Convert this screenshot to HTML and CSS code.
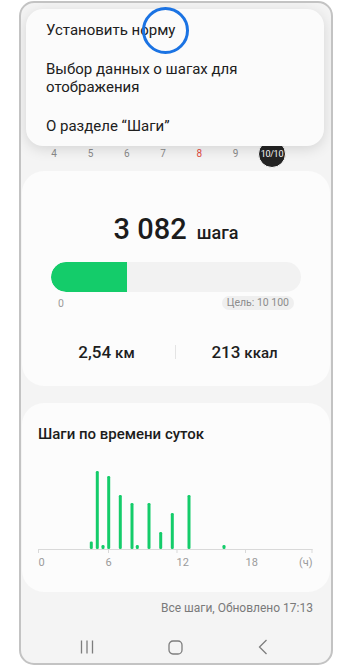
FILE: index.html
```html
<!DOCTYPE html>
<html lang="ru">
<head>
<meta charset="utf-8">
<title>Шаги</title>
<link rel="stylesheet" href="styles.css">
</head>
<body>
<div class="phone">
  <div class="top-area">
    <div class="dates">
      <span class="d">4</span>
      <span class="d">5</span>
      <span class="d">6</span>
      <span class="d">7</span>
      <span class="d red">8</span>
      <span class="d">9</span>
      <span class="d"><span class="today">10/10</span></span>
    </div>
  </div>

  <section class="card steps-card">
    <div class="count-row">
      <span class="count">3 082</span>
      <span class="count-unit">шага</span>
    </div>
    <div class="bar"><div class="bar-fill" style="width:30.5%"></div></div>
    <div class="bar-labels">
      <span class="zero">0</span>
      <span class="goal">Цель: 10 100</span>
    </div>
    <div class="stats">
      <div class="stat"><span class="num">2,54</span> <span class="unit">км</span></div>
      <div class="sep"></div>
      <div class="stat"><span class="num">213</span> <span class="unit">ккал</span></div>
    </div>
  </section>

  <section class="card chart-card">
    <h2 class="chart-title">Шаги по времени суток</h2>
    <svg class="chart" width="308" height="131" viewBox="0 0 308 131">
      <g fill="#14cc6a">
        <rect x="67.8" y="97.5" width="3" height="7.5" rx="1.3"/>
        <rect x="73.8" y="27" width="3" height="78" rx="1.3"/>
        <rect x="79.5" y="101" width="3" height="4" rx="1.3"/>
        <rect x="85.2" y="32" width="3" height="73" rx="1.3"/>
        <rect x="96.8" y="51" width="3" height="54" rx="1.3"/>
        <rect x="108.5" y="59" width="3" height="46" rx="1.3"/>
        <rect x="113.8" y="101" width="3" height="4" rx="1.3"/>
        <rect x="125.5" y="59" width="3" height="46" rx="1.3"/>
        <rect x="137.2" y="88" width="3" height="17" rx="1.3"/>
        <rect x="148.8" y="69" width="3" height="36" rx="1.3"/>
        <rect x="165.5" y="51" width="3" height="54" rx="1.3"/>
        <rect x="200.5" y="101" width="3" height="4" rx="1.3"/>
      </g>
      <g stroke="#d9d9d9" stroke-width="1">
        <line x1="16" y1="105.5" x2="290.5" y2="105.5"/>
        <line x1="16.5" y1="105" x2="16.5" y2="109"/>
        <line x1="86.5" y1="105" x2="86.5" y2="109"/>
        <line x1="155" y1="105" x2="155" y2="109"/>
        <line x1="223.5" y1="105" x2="223.5" y2="109"/>
        <line x1="290" y1="105" x2="290" y2="109"/>
      </g>
      <g class="axis-text">
        <text x="16.5" y="122">0</text>
        <text x="86.5" y="122" text-anchor="middle">6</text>
        <text x="154.5" y="122">12</text>
        <text x="223.5" y="122">18</text>
        <text x="290.5" y="122" text-anchor="end">(ч)</text>
      </g>
    </svg>
  </section>

  <div class="footer">Все шаги, Обновлено 17:13</div>

  <nav class="navbar">
    <span class="nav-item">
      <svg width="14" height="14" viewBox="0 0 14 14"><g stroke="#7d7d7d" stroke-width="1.3"><line x1="1.5" y1="0.5" x2="1.5" y2="13.5"/><line x1="7" y1="0.5" x2="7" y2="13.5"/><line x1="12.5" y1="0.5" x2="12.5" y2="13.5"/></g></svg>
    </span>
    <span class="nav-item">
      <svg width="15" height="15" viewBox="0 0 15 15"><rect x="1" y="1" width="13" height="13" rx="4" fill="none" stroke="#7d7d7d" stroke-width="1.3"/></svg>
    </span>
    <span class="nav-item">
      <svg width="10" height="16" viewBox="0 0 10 16"><polyline points="8.5,1 1.5,8 8.5,15" fill="none" stroke="#7d7d7d" stroke-width="1.3"/></svg>
    </span>
  </nav>

  <div class="menu">
    <div class="menu-item">Установить норму</div>
    <div class="menu-item">Выбор данных о шагах для отображения</div>
    <div class="menu-item">О разделе “Шаги”</div>
  </div>
  <div class="highlight"></div>
</div>
</body>
</html>
```

FILE: styles.css
```css
* { box-sizing: border-box; }

html, body {
  margin: 0;
  padding: 0;
  background: #ffffff;
}

body {
  font-family: Roboto, "Noto Sans", "Liberation Sans", sans-serif;
  color: #1e1e1e;
}

.phone {
  position: relative;
  margin: 1px 0 0 19px;
  width: 314px;
  height: 664px;
  border: 2px solid #c3c3c3;
  border-radius: 15px;
  background: #f4f4f4;
  overflow: hidden;
}

.top-area {
  height: 168px;
  padding-top: 135px;
}

.dates {
  display: grid;
  grid-template-columns: repeat(7, 36.3px);
  margin-left: 15px;
  height: 20px;
  align-items: center;
  justify-items: center;
  font-size: 10px;
  color: #8a8a8a;
}

.dates .red { color: #e24a3f; }

.today {
  display: flex;
  align-items: center;
  justify-content: center;
  width: 28px;
  height: 28px;
  margin-top: 2px;
  border-radius: 50%;
  background: #242424;
  border: 1px solid #ffffff;
  color: #ffffff;
  font-size: 9px;
  letter-spacing: -0.3px;
}

.card {
  margin: 0 1px;
  background: #fcfcfc;
  border-radius: 22px;
}

.steps-card {
  height: 215px;
  padding: 41px 29px 0 29px;
}

.count-row {
  display: flex;
  justify-content: center;
  align-items: baseline;
  gap: 10px;
  height: 34px;
  line-height: 34px;
}

.count {
  font-size: 29px;
  font-weight: 500;
  color: #1c1c1c;
}

.count-unit {
  font-size: 18px;
  font-weight: 500;
  color: #1c1c1c;
}

.bar {
  margin-top: 16px;
  height: 30px;
  border-radius: 15px;
  background: #f2f2f2;
  overflow: hidden;
}

.bar-fill {
  height: 100%;
  background: #14cc6a;
  border-radius: 15px 0 0 15px;
}

.bar-labels {
  display: flex;
  justify-content: space-between;
  align-items: center;
  margin-top: 4px;
  height: 14px;
  font-size: 10.5px;
  color: #9a9a9a;
}

.zero { margin-left: 7px; }

.goal {
  margin-right: 7px;
  padding: 0 5px;
  height: 14px;
  line-height: 14px;
  border-radius: 7px;
  background: #efefef;
  color: #8c8c8c;
}

.stats {
  display: grid;
  grid-template-columns: 1fr 1px 1fr;
  align-items: center;
  margin: 30px -12px 0 -13px;
  height: 24px;
}

.stat {
  text-align: center;
  white-space: nowrap;
}

.stat .num {
  font-size: 17px;
  font-weight: 500;
}

.stat .unit {
  font-size: 15px;
  font-weight: 500;
}

.sep {
  width: 1px;
  height: 14px;
  background: #e4e4e4;
}

.chart-card {
  margin-top: 17px;
  height: 189px;
  padding-top: 21px;
}

.chart-title {
  margin: 0;
  padding-left: 16px;
  height: 20px;
  line-height: 20px;
  font-size: 15px;
  font-weight: 500;
  color: #1c1c1c;
}

.chart {
  display: block;
}

.axis-text text {
  font-family: Roboto, "Noto Sans", "Liberation Sans", sans-serif;
  font-size: 11px;
  fill: #9b9b9b;
}

.footer {
  margin-top: 8px;
  height: 16px;
  line-height: 16px;
  padding-right: 18px;
  text-align: right;
  font-size: 12px;
  color: #7a7a7a;
}

.navbar {
  display: grid;
  grid-template-columns: repeat(3, 88px);
  justify-content: center;
  justify-items: center;
  align-items: center;
  margin-top: 16px;
  height: 30px;
  padding-right: 2px;
}

.nav-item {
  display: flex;
  align-items: center;
  justify-content: center;
}

.nav-item svg { display: block; }

.menu {
  position: absolute;
  left: 5px;
  top: 6px;
  width: 298px;
  padding: 1px 0;
  background: #fbfbfb;
  border-radius: 17px;
  box-shadow: 0 3px 14px rgba(0, 0, 0, 0.13);
}

.menu-item {
  padding: 10.5px 20px;
  font-size: 15px;
  line-height: 18px;
  color: #202020;
}

.menu-item:nth-child(2) {
  padding-right: 60px;
}

.highlight {
  position: absolute;
  left: 121px;
  top: 3.5px;
  width: 47px;
  height: 47px;
  border: 3px solid #1b73e3;
  border-radius: 50%;
}
```
